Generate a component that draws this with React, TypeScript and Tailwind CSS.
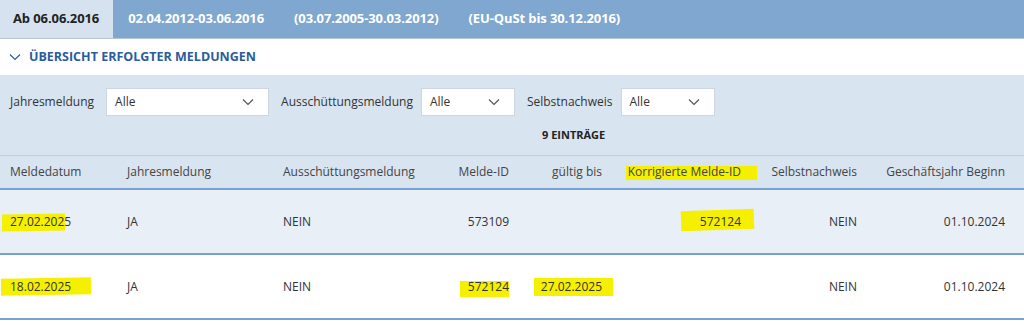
import React from 'react';

const TABS = ['Ab 06.06.2016', '02.04.2012-03.06.2016', '(03.07.2005-30.03.2012)', '(EU-QuSt bis 30.12.2016)'];

const COLS = [
  { label: 'Meldedatum', cls: 'w-[117px] pl-[10px] text-left' },
  { label: 'Jahresmeldung', cls: 'w-[156px] pl-[10px] text-left' },
  { label: 'Ausschüttungsmeldung', cls: 'w-[147px] pl-[10px] text-left' },
  { label: 'Melde-ID', cls: 'w-[99px] pr-[10px] text-right' },
  { label: 'gültig bis', cls: 'w-[93px] pr-[10px] text-right' },
  { label: 'Korrigierte Melde-ID', cls: 'w-[139px] pr-[10px] text-right' },
  { label: 'Selbstnachweis', cls: 'w-[116px] pr-[10px] text-right' },
  { label: 'Geschäftsjahr Beginn', cls: 'flex-1 pr-[19px] text-right' },
];

// marker-pen highlight drawn behind a text
function Mark({ children, box }: { children: React.ReactNode; box: string }) {
  return (
    <span className="relative inline-block">
      <span className={`absolute bg-[#f4f000] ${box}`} />
      <span className="relative">{children}</span>
    </span>
  );
}

function Chevron({ className }: { className?: string }) {
  return (
    <svg width="12" height="8" viewBox="0 0 12 8" className={className} fill="none" stroke="currentColor" strokeWidth="1.2">
      <path d="M1 1.5 L6 6.5 L11 1.5" />
    </svg>
  );
}

function Select({ w }: { w: string }) {
  return (
    <div className={`${w} h-[28px] bg-white border border-[#cfd6de] flex items-center justify-between pl-[8px] pr-[14px] text-[12px] text-[#333]`}>
      <span>Alle</span>
      <Chevron className="text-[#555]" />
    </div>
  );
}

export default function App() {
  const rows: React.ReactNode[][] = [
    [
      <Mark box="-left-[8px] right-[6px] top-[1px] bottom-[0px] -skew-y-1">27.02.2025</Mark>,
      'JA',
      'NEIN',
      '573109',
      '',
      <Mark box="-left-[19px] -right-[13px] -top-[3px] bottom-[1px] -rotate-2">572124</Mark>,
      'NEIN',
      '01.10.2024',
    ],
    [
      <Mark box="-left-[9px] -right-[20px] top-[0px] bottom-[1px] -rotate-1">18.02.2025</Mark>,
      'JA',
      'NEIN',
      <Mark box="-left-[8px] right-[0px] top-[3px] -bottom-[1px]">572124</Mark>,
      <Mark box="-left-[7px] -right-[11px] top-[0px] bottom-[0px]">27.02.2025</Mark>,
      '',
      'NEIN',
      '01.10.2024',
    ],
  ];

  return (
    <div className="w-[1024px] h-[325px] bg-white font-['Open_Sans',sans-serif] text-[#333] overflow-hidden">
      {/* Tabs */}
      <div className="h-[39px] bg-[#80a7cf] flex border-b border-[#b9c4cf]">
        {TABS.map((t, i) => (
          <div
            key={t}
            className={`h-full flex items-center text-[13px] font-bold tracking-[-0.1px] ${i === 0 ? 'bg-[#d6e2ef] text-[#222] pl-[13px] pr-[14px]' : 'text-white px-[15px]'}`}
          >
            {t}
          </div>
        ))}
      </div>

      {/* Section title */}
      <div className="h-[37px] flex items-center gap-[8px] pl-[9px] text-[#2b5c9e] border-b border-[#dde3ea]">
        <Chevron />
        <span className="text-[12.5px] font-bold">ÜBERSICHT ERFOLGTER MELDUNGEN</span>
      </div>

      {/* Filters */}
      <div className="bg-[#d8e4f0] border-b border-[#c5ced7]">
        <div className="flex items-center pt-[12px] pl-[10px] text-[12px] text-[#333]">
          <span className="mr-[12px]">Jahresmeldung</span>
          <Select w="w-[163px]" />
          <span className="ml-[12px] mr-[8px]">Ausschüttungsmeldung</span>
          <Select w="w-[94px]" />
          <span className="ml-[12px] mr-[8px]">Selbstnachweis</span>
          <Select w="w-[94px]" />
        </div>
        <div className="h-[39px] flex items-center pl-[542px] text-[11px] font-bold text-[#222]">9 EINTRÄGE</div>
      </div>

      {/* Table header */}
      <div className="h-[34px] bg-[#d8e4f0] flex items-center text-[12px] text-[#444] border-b-2 border-[#79a2d2]">
        {COLS.map((c, i) => (
          <div key={c.label} className={c.cls}>
            {i === 5 ? <Mark box="-left-[2px] -right-[16px] top-[3px] bottom-[1px]">{c.label}</Mark> : c.label}
          </div>
        ))}
      </div>

      {/* Rows */}
      {rows.map((r, ri) => (
        <div
          key={ri}
          className={`h-[65px] flex items-center text-[12px] text-[#333] border-b-2 border-[#79a2d2] ${ri === 0 ? 'bg-[#e9eff7]' : 'bg-white'}`}
        >
          {r.map((v, ci) => (
            <div key={ci} className={`${COLS[ci].cls} ${ci === 1 || ci === 2 || ci === 6 ? 'font-medium' : ''}`}>
              {v}
            </div>
          ))}
        </div>
      ))}
    </div>
  );
}
